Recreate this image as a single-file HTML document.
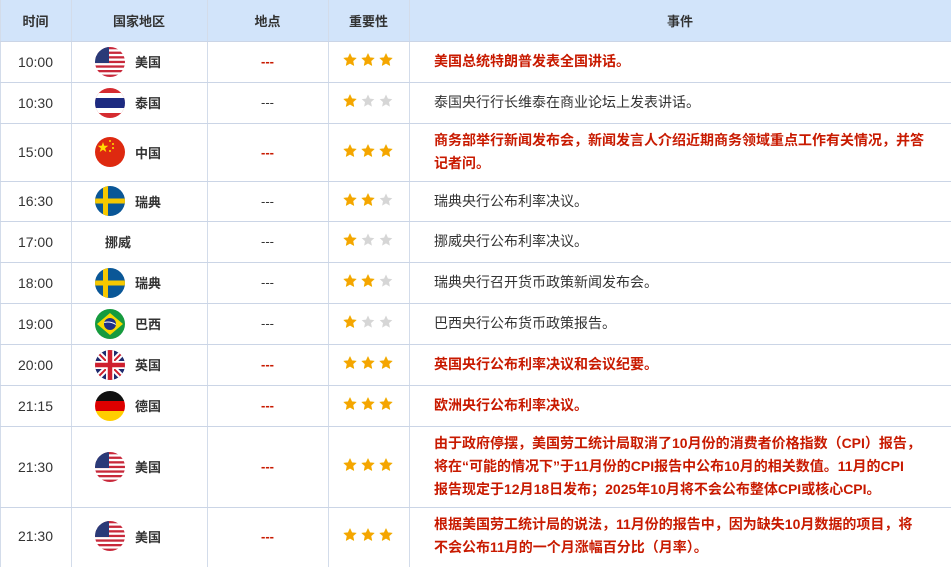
<!DOCTYPE html>
<html><head><meta charset="utf-8"><style>
*{margin:0;padding:0;box-sizing:border-box}
body{width:951px;height:567px;overflow:hidden;background:#fff;font-family:"Liberation Sans","Noto Sans CJK SC","WenQuanYi Zen Hei",sans-serif;font-size:13px;color:#333;position:relative}
.vl{position:absolute;top:0;bottom:0;width:1px;background:#d3dcea}
.hl{position:absolute;left:0;right:0;height:1px;background:#cbd5e6}
.hd{position:absolute;top:0;left:0;width:951px;height:41px;background:#d2e4fa}
.c{position:absolute;display:flex;align-items:center}
.th{font-weight:bold;color:#333;justify-content:center;height:41px;top:0}
.t{left:0;width:71px;justify-content:center;font-size:14px}
.cn{left:95px;font-weight:bold}
.cn svg{margin-right:10px}
.loc{left:207px;width:121px;justify-content:center}
.st{left:343px}
.st svg{margin-right:4px}
.ev{left:434px;line-height:23px;white-space:nowrap;font-size:14px}
.red{color:#c81a00;font-weight:bold}
.loc.red{font-size:13px}
</style></head><body>
<div class="hd"></div>
<div class="c th" style="left:0;width:71px">时间</div>
<div class="c th" style="left:71px;width:136px">国家地区</div>
<div class="c th" style="left:207px;width:121px">地点</div>
<div class="c th" style="left:328px;width:81px">重要性</div>
<div class="c th" style="left:409px;width:542px">事件</div>
<div class="vl" style="left:0"></div><div class="vl" style="left:71px"></div><div class="vl" style="left:207px"></div><div class="vl" style="left:328px"></div><div class="vl" style="left:409px"></div>
<div class="hl" style="top:41px"></div><div class="hl" style="top:82px"></div><div class="hl" style="top:123px"></div><div class="hl" style="top:181px"></div><div class="hl" style="top:221px"></div><div class="hl" style="top:262px"></div><div class="hl" style="top:303px"></div><div class="hl" style="top:344px"></div><div class="hl" style="top:385px"></div><div class="hl" style="top:426px"></div><div class="hl" style="top:507px"></div>

<svg width="0" height="0" style="position:absolute"><defs>
<clipPath id="cc"><circle cx="15" cy="15" r="15"/></clipPath>
<symbol id="g" viewBox="0 0 14 14"><path d="M7 0.5L8.9 4.6 13.3 5.1 10 8.1 10.9 12.6 7 10.4 3.1 12.6 4 8.1 0.7 5.1 5.1 4.6Z" fill="#f5a500" stroke="#f0b000" stroke-width=".5"/></symbol>
<symbol id="e" viewBox="0 0 14 14"><path d="M7 0.5L8.9 4.6 13.3 5.1 10 8.1 10.9 12.6 7 10.4 3.1 12.6 4 8.1 0.7 5.1 5.1 4.6Z" fill="#d6d6d6"/></symbol>
<symbol id="us" viewBox="0 0 30 30"><g clip-path="url(#cc)"><rect width="30" height="30" fill="#fff"/><g fill="#c8283a"><rect y="0" width="30" height="2.3"/><rect y="4.6" width="30" height="2.3"/><rect y="9.2" width="30" height="2.3"/><rect y="13.8" width="30" height="2.3"/><rect y="18.4" width="30" height="2.3"/><rect y="23" width="30" height="2.3"/><rect y="27.6" width="30" height="2.4"/></g><rect width="14" height="16" fill="#2a3a78"/></g></symbol>
<symbol id="th" viewBox="0 0 30 30"><g clip-path="url(#cc)"><rect width="30" height="30" fill="#d52b30"/><rect y="5" width="30" height="20" fill="#fff"/><rect y="10" width="30" height="10" fill="#1d2a80"/></g></symbol>
<symbol id="cn" viewBox="0 0 30 30"><g clip-path="url(#cc)"><rect width="30" height="30" fill="#de2910"/><path d="M8 5l1.3 3.8h4l-3.2 2.4 1.2 3.8-3.3-2.3-3.3 2.3 1.2-3.8-3.2-2.4h4z" fill="#ffde00"/><g fill="#ffde00"><circle cx="15" cy="4" r="1"/><circle cx="18" cy="7" r="1"/><circle cx="18" cy="11" r="1"/><circle cx="15" cy="14" r="1"/></g></g></symbol>
<symbol id="se" viewBox="0 0 30 30"><g clip-path="url(#cc)"><rect width="30" height="30" fill="#0a5797"/><rect x="8" width="5" height="30" fill="#f6c800"/><rect y="12.5" width="30" height="5" fill="#f6c800"/></g></symbol>
<symbol id="br" viewBox="0 0 30 30"><g clip-path="url(#cc)"><rect width="30" height="30" fill="#169b3e"/><path d="M15 4L28 15 15 26 2 15Z" fill="#f8d800"/><circle cx="15" cy="15" r="6" fill="#1e2f86"/><path d="M9.3 13.5q6-1.5 11.5 2" stroke="#fff" stroke-width="1" fill="none"/></g></symbol>
<symbol id="gb" viewBox="0 0 30 30"><g clip-path="url(#cc)"><rect width="30" height="30" fill="#1f2a6e"/><path d="M0 0L30 30M30 0L0 30" stroke="#fff" stroke-width="6"/><path d="M0 0L30 30M30 0L0 30" stroke="#cf1f2e" stroke-width="2"/><path d="M15 0V30M0 15H30" stroke="#fff" stroke-width="8"/><path d="M15 0V30M0 15H30" stroke="#cf1f2e" stroke-width="4.5"/></g></symbol>
<symbol id="de" viewBox="0 0 30 30"><g clip-path="url(#cc)"><rect width="30" height="10" fill="#111"/><rect y="10" width="30" height="10" fill="#dd0000"/><rect y="20" width="30" height="10" fill="#ffce00"/></g></symbol>
</defs></svg>

<div class="c t" style="top:41px;height:41px">10:00</div>
<div class="c cn" style="top:41px;height:41px"><svg width="30" height="30"><use href="#us"/></svg>美国</div>
<div class="c loc red" style="top:41px;height:41px">---</div>
<div class="c st" style="top:41px;height:38px"><svg width="14" height="14"><use href="#g"/></svg><svg width="14" height="14"><use href="#g"/></svg><svg width="14" height="14"><use href="#g"/></svg></div>
<div class="c ev red" style="top:41px;height:41px">美国总统特朗普发表全国讲话。</div>

<div class="c t" style="top:82px;height:41px">10:30</div>
<div class="c cn" style="top:82px;height:41px"><svg width="30" height="30"><use href="#th"/></svg>泰国</div>
<div class="c loc" style="top:82px;height:41px">---</div>
<div class="c st" style="top:82px;height:38px"><svg width="14" height="14"><use href="#g"/></svg><svg width="14" height="14"><use href="#e"/></svg><svg width="14" height="14"><use href="#e"/></svg></div>
<div class="c ev" style="top:82px;height:41px">泰国央行行长维泰在商业论坛上发表讲话。</div>

<div class="c t" style="top:123px;height:58px">15:00</div>
<div class="c cn" style="top:123px;height:58px"><svg width="30" height="30"><use href="#cn"/></svg>中国</div>
<div class="c loc red" style="top:123px;height:58px">---</div>
<div class="c st" style="top:123px;height:55px"><svg width="14" height="14"><use href="#g"/></svg><svg width="14" height="14"><use href="#g"/></svg><svg width="14" height="14"><use href="#g"/></svg></div>
<div class="c ev red" style="top:123px;height:58px">商务部举行新闻发布会，新闻发言人介绍近期商务领域重点工作有关情况，并答<br>记者问。</div>

<div class="c t" style="top:181px;height:40px">16:30</div>
<div class="c cn" style="top:181px;height:40px"><svg width="30" height="30"><use href="#se"/></svg>瑞典</div>
<div class="c loc" style="top:181px;height:40px">---</div>
<div class="c st" style="top:181px;height:37px"><svg width="14" height="14"><use href="#g"/></svg><svg width="14" height="14"><use href="#g"/></svg><svg width="14" height="14"><use href="#e"/></svg></div>
<div class="c ev" style="top:181px;height:40px">瑞典央行公布利率决议。</div>

<div class="c t" style="top:221px;height:41px">17:00</div>
<div class="c" style="left:105px;top:221px;height:41px;font-weight:bold">挪威</div>
<div class="c loc" style="top:221px;height:41px">---</div>
<div class="c st" style="top:221px;height:38px"><svg width="14" height="14"><use href="#g"/></svg><svg width="14" height="14"><use href="#e"/></svg><svg width="14" height="14"><use href="#e"/></svg></div>
<div class="c ev" style="top:221px;height:41px">挪威央行公布利率决议。</div>

<div class="c t" style="top:262px;height:41px">18:00</div>
<div class="c cn" style="top:262px;height:41px"><svg width="30" height="30"><use href="#se"/></svg>瑞典</div>
<div class="c loc" style="top:262px;height:41px">---</div>
<div class="c st" style="top:262px;height:38px"><svg width="14" height="14"><use href="#g"/></svg><svg width="14" height="14"><use href="#g"/></svg><svg width="14" height="14"><use href="#e"/></svg></div>
<div class="c ev" style="top:262px;height:41px">瑞典央行召开货币政策新闻发布会。</div>

<div class="c t" style="top:303px;height:41px">19:00</div>
<div class="c cn" style="top:303px;height:41px"><svg width="30" height="30"><use href="#br"/></svg>巴西</div>
<div class="c loc" style="top:303px;height:41px">---</div>
<div class="c st" style="top:303px;height:38px"><svg width="14" height="14"><use href="#g"/></svg><svg width="14" height="14"><use href="#e"/></svg><svg width="14" height="14"><use href="#e"/></svg></div>
<div class="c ev" style="top:303px;height:41px">巴西央行公布货币政策报告。</div>

<div class="c t" style="top:344px;height:41px">20:00</div>
<div class="c cn" style="top:344px;height:41px"><svg width="30" height="30"><use href="#gb"/></svg>英国</div>
<div class="c loc red" style="top:344px;height:41px">---</div>
<div class="c st" style="top:344px;height:38px"><svg width="14" height="14"><use href="#g"/></svg><svg width="14" height="14"><use href="#g"/></svg><svg width="14" height="14"><use href="#g"/></svg></div>
<div class="c ev red" style="top:344px;height:41px">英国央行公布利率决议和会议纪要。</div>

<div class="c t" style="top:385px;height:41px">21:15</div>
<div class="c cn" style="top:385px;height:41px"><svg width="30" height="30"><use href="#de"/></svg>德国</div>
<div class="c loc red" style="top:385px;height:41px">---</div>
<div class="c st" style="top:385px;height:38px"><svg width="14" height="14"><use href="#g"/></svg><svg width="14" height="14"><use href="#g"/></svg><svg width="14" height="14"><use href="#g"/></svg></div>
<div class="c ev red" style="top:385px;height:41px">欧洲央行公布利率决议。</div>

<div class="c t" style="top:426px;height:81px">21:30</div>
<div class="c cn" style="top:426px;height:81px"><svg width="30" height="30"><use href="#us"/></svg>美国</div>
<div class="c loc red" style="top:426px;height:81px">---</div>
<div class="c st" style="top:426px;height:78px"><svg width="14" height="14"><use href="#g"/></svg><svg width="14" height="14"><use href="#g"/></svg><svg width="14" height="14"><use href="#g"/></svg></div>
<div class="c ev red" style="top:426px;height:81px">由于政府停摆，美国劳工统计局取消了10月份的消费者价格指数（CPI）报告，<br>将在“可能的情况下”于11月份的CPI报告中公布10月的相关数值。11月的CPI<br>报告现定于12月18日发布；2025年10月将不会公布整体CPI或核心CPI。</div>

<div class="c t" style="top:507px;height:58px">21:30</div>
<div class="c cn" style="top:507px;height:58px"><svg width="30" height="30"><use href="#us"/></svg>美国</div>
<div class="c loc red" style="top:507px;height:58px">---</div>
<div class="c st" style="top:507px;height:55px"><svg width="14" height="14"><use href="#g"/></svg><svg width="14" height="14"><use href="#g"/></svg><svg width="14" height="14"><use href="#g"/></svg></div>
<div class="c ev red" style="top:507px;height:58px">根据美国劳工统计局的说法，11月份的报告中，因为缺失10月数据的项目，将<br>不会公布11月的一个月涨幅百分比（月率）。</div>
</body></html>
